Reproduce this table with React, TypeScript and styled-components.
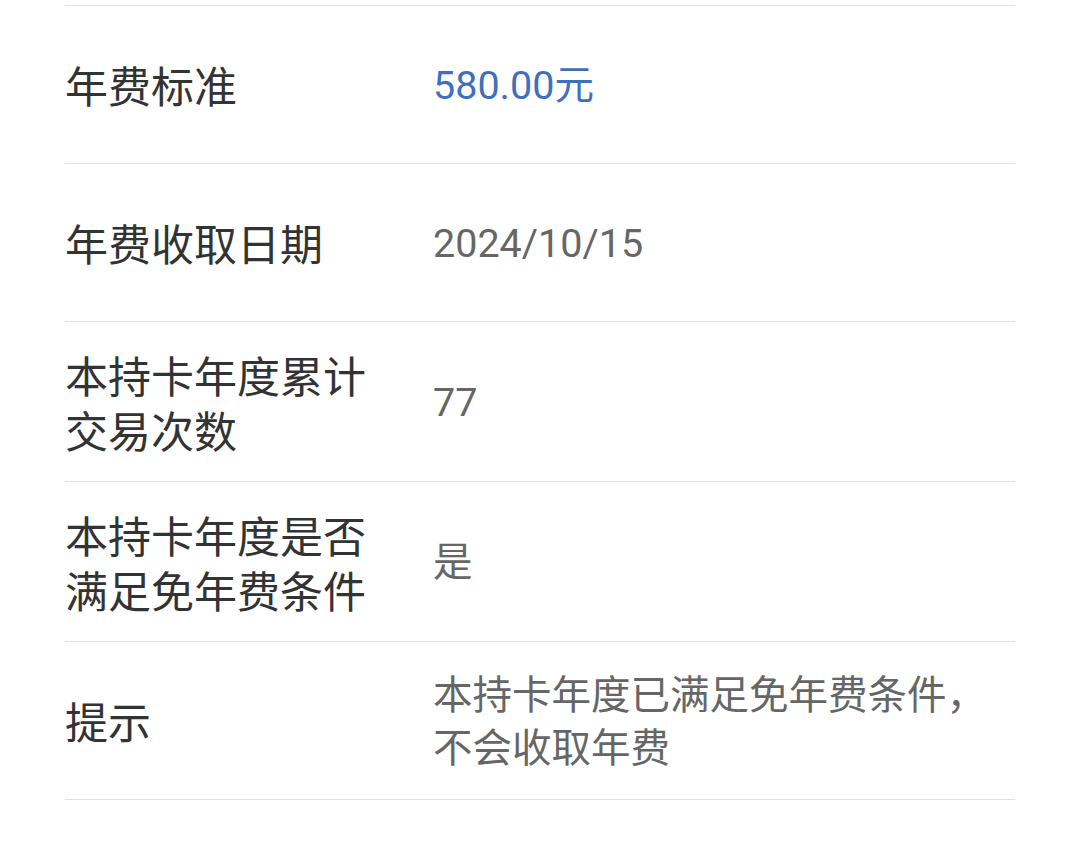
import React from "react";
import styled, { createGlobalStyle } from "styled-components";

const Global = createGlobalStyle`
  html, body { margin: 0; padding: 0; background: #ffffff; }
  body { font-family: Roboto, "Noto Sans CJK SC", sans-serif; }
`;

const Page = styled.div`
  padding: 5px 65px 0 65px;
  background: #ffffff;
`;

const List = styled.div`
  border-top: 1px solid #e3e3e3;
`;

const Row = styled.div`
  display: grid;
  grid-template-columns: 368px 1fr;
  align-items: center;
  min-height: 158px;
  padding: 24.5px 0;
  box-sizing: border-box;
  border-bottom: 1px solid #e3e3e3;
`;

const Label = styled.div`
  font-family: "Noto Sans CJK SC", sans-serif;
  font-size: 43px;
  line-height: 55px;
  color: #333333;
  width: 310px;
`;

const Value = styled.div<{ $accent?: boolean }>`
  font-family: Roboto, "Noto Sans CJK SC", sans-serif;
  font-size: 39.5px;
  line-height: 53px;
  color: ${(p) => (p.$accent ? "#3f70bd" : "#666666")};
  padding-right: 20px;
  padding-top: 2px;
`;

const rows: { label: string; value: string; accent?: boolean }[] = [
  { label: "年费标准", value: "580.00元", accent: true },
  { label: "年费收取日期", value: "2024/10/15" },
  { label: "本持卡年度累计交易次数", value: "77" },
  { label: "本持卡年度是否满足免年费条件", value: "是" },
  { label: "提示", value: "本持卡年度已满足免年费条件，不会收取年费" },
];

export default function App() {
  return (
    <>
      <Global />
      <Page>
        <List>
          {rows.map((r) => (
            <Row key={r.label}>
              <Label>{r.label}</Label>
              <Value $accent={r.accent}>{r.value}</Value>
            </Row>
          ))}
        </List>
      </Page>
    </>
  );
}
